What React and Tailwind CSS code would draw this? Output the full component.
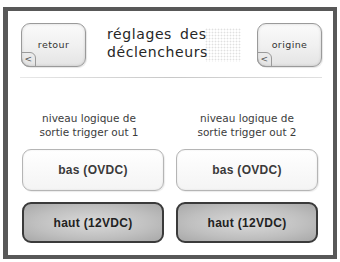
export default function App() {
  const corner = (
    <span className="absolute bottom-[-1px] left-[-1px] flex h-[15px] w-[15px] items-center justify-center rounded-tr-[6px] rounded-bl-[8px] border border-[#9a9a9a] text-[9px] leading-none text-[#555]">
      &lt;
    </span>
  );

  const navBtn =
    "relative flex h-[44px] w-[65px] items-start justify-center rounded-[9px] border border-[#9a9a9a] bg-gradient-to-b from-[#fafafa] via-[#f1f1f1] to-[#e4e4e4] pt-[14px] font-['DejaVu_Sans',sans-serif] text-[9.5px] tracking-[0.4px] text-[#333] shadow-[inset_0_0_3px_rgba(0,0,0,0.15),1px_1px_1px_rgba(0,0,0,0.1)]";

  const col = (n, labelCls) => (
    <div className="flex flex-col">
      <p
        className={
          "text-center font-['DejaVu_Sans',sans-serif] text-[10.5px] leading-[13.5px] text-[#3c3c3c] " +
          labelCls
        }
      >
        niveau logique de
        <br />
        sortie trigger out {n}
      </p>
      <button className="mt-[10px] flex h-[42px] items-center justify-center rounded-[9px] border border-[#b5b5b5] bg-gradient-to-b from-white to-[#f4f4f4] text-[12px] font-bold tracking-[0.3px] text-[#3a3a3a] shadow-[inset_0_0_2px_rgba(0,0,0,0.1),1px_1px_1px_rgba(0,0,0,0.08)]">
        bas (OVDC)
      </button>
      <button className="mt-[11px] flex h-[41px] items-center justify-center rounded-[9px] border-2 border-[#3a3a3a] bg-[radial-gradient(ellipse_at_center,#dadada_0%,#bfbfbf_60%,#a8a8a8_100%)] text-[12px] font-bold tracking-[0.3px] text-[#222]">
        haut (12VDC)
      </button>
    </div>
  );

  return (
    <div
      className="h-[262px] w-[340px] bg-white px-[3px] pb-[3px] pt-[7px]"
      style={{ fontFamily: '"Liberation Sans", Arial, sans-serif' }}
    >
      <div className="flex h-full flex-col border-[4px] border-l-[5px] border-[#585858] bg-white">
        <div className="flex items-start pl-[13px] pr-[11px] pt-[12px]">
          <button className={navBtn}>
            retour
            {corner}
          </button>
          <div className="relative ml-[21px] mt-[2px] flex-1">
            <div className="absolute left-[98px] top-[3px] h-[34px] w-[36px] bg-[radial-gradient(#e0e0e0_0.8px,transparent_1.1px)] bg-[size:3px_3px]" />
            <p className="relative font-['DejaVu_Sans',sans-serif] text-[14px] leading-[18px] tracking-[0.6px] text-[#262626] [word-spacing:3px]">
              réglages des
              <br />
              déclencheurs
            </p>
          </div>
          <button className={navBtn}>
            origine
            {corner}
          </button>
        </div>
        <div className="ml-[12px] mr-[11px] mt-[10px] h-px bg-gradient-to-r from-[#e8e8e8] via-[#c8c8c8] to-[#e0e0e0]" />
        <div className="mt-[34px] grid grid-cols-2 gap-[12px] pl-[14px] pr-[15px]">
          {col(1, "pr-[8px]")}
          {col(2, "")}
        </div>
      </div>
    </div>
  );
}
